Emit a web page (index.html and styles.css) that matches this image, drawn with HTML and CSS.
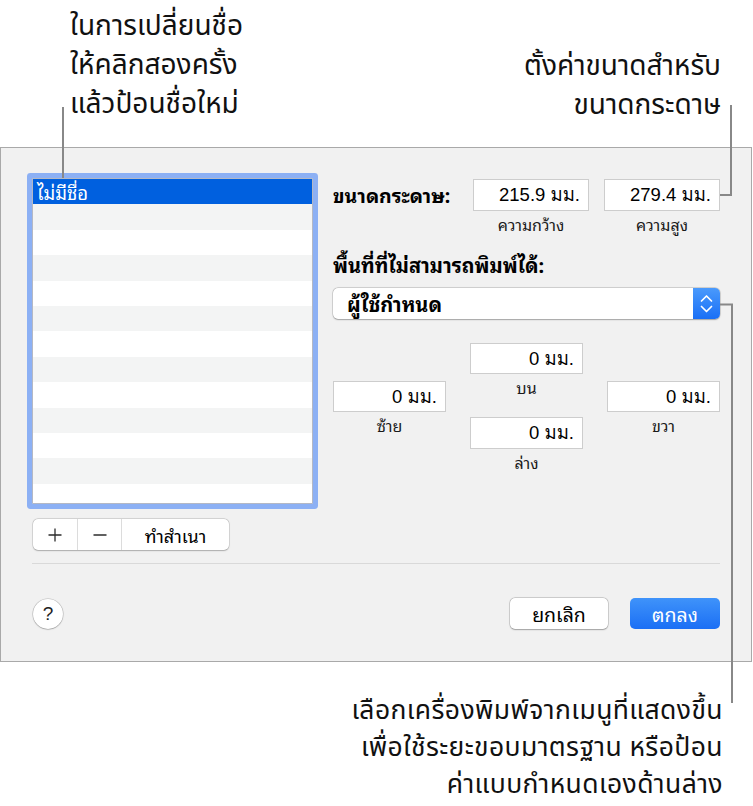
FILE: index.html
```html
<!DOCTYPE html>
<html lang="th">
<head>
<meta charset="utf-8">
<title>ขนาดกระดาษ</title>
<link rel="stylesheet" href="styles.css">
</head>
<body>
<div class="page">
  <div class="header">
    <div class="callout callout-left">ในการเปลี่ยนชื่อ<br>ให้คลิกสองครั้ง<br>แล้วป้อนชื่อใหม่</div>
    <div class="callout callout-right">ตั้งค่าขนาดสำหรับ<br>ขนาดกระดาษ</div>
  </div>

  <div class="window">
    <div class="window-body">
      <div class="left-col">
        <div class="list">
          <div class="row selected">ไม่มีชื่อ</div>
          <div class="row"></div><div class="row"></div><div class="row"></div>
          <div class="row"></div><div class="row"></div><div class="row"></div>
          <div class="row"></div><div class="row"></div><div class="row"></div>
          <div class="row"></div><div class="row"></div>
        </div>
        <div class="seg">
          <div class="seg-btn seg-plus"><svg width="14" height="14" viewBox="0 0 14 14"><path d="M7 0.5V13.5M0.5 7H13.5" stroke="#2b2b2b" stroke-width="1.3" fill="none"/></svg></div>
          <div class="seg-btn seg-minus"><svg width="14" height="14" viewBox="0 0 14 14"><path d="M0.5 7H13.5" stroke="#2b2b2b" stroke-width="1.3" fill="none"/></svg></div>
          <div class="seg-btn seg-dup">ทำสำเนา</div>
        </div>
      </div>

      <div class="right-col">
        <div class="size-row">
          <div class="size-label">ขนาดกระดาษ:</div>
          <div class="field-group">
            <div class="field">215.9 มม.</div>
            <div class="sub">ความกว้าง</div>
          </div>
          <div class="field-group">
            <div class="field">279.4 มม.</div>
            <div class="sub">ความสูง</div>
          </div>
        </div>

        <div class="section-label">พื้นที่ที่ไม่สามารถพิมพ์ได้:</div>

        <div class="popup">
          <div class="popup-text">ผู้ใช้กำหนด</div>
          <div class="stepper"><svg width="27" height="31" viewBox="0 0 27 31"><path d="M8.5 13L13.5 8L18.5 13M8.5 18.5L13.5 23.5L18.5 18.5" stroke="#fff" stroke-width="1.7" fill="none" stroke-linecap="round" stroke-linejoin="round"/></svg></div>
        </div>

        <div class="margins">
          <div class="mcol mcol-side">
            <div class="field mfield">0 มม.</div>
            <div class="sub">ซ้าย</div>
          </div>
          <div class="mcol">
            <div class="field mfield">0 มม.</div>
            <div class="sub">บน</div>
            <div class="field mfield mfield-bottom">0 มม.</div>
            <div class="sub">ล่าง</div>
          </div>
          <div class="mcol mcol-side">
            <div class="field mfield">0 มม.</div>
            <div class="sub">ขวา</div>
          </div>
        </div>
      </div>
    </div>

    <div class="separator"></div>

    <div class="footer">
      <div class="help">?</div>
      <div class="actions">
        <div class="btn btn-cancel">ยกเลิก</div>
        <div class="btn btn-ok">ตกลง</div>
      </div>
    </div>
  </div>

  <div class="callout callout-bottom">
    <div class="cline">เลือกเครื่องพิมพ์จากเมนูที่แสดงขึ้น</div>
    <div class="cline">เพื่อใช้ระยะขอบมาตรฐาน หรือป้อน</div>
    <div class="cline">ค่าแบบกำหนดเองด้านล่าง</div>
  </div>

  <svg class="leaders" width="753" height="806" viewBox="0 0 753 806">
    <path d="M63 107V178" />
    <path d="M731 105V195H720" />
    <path d="M720 304.5H732V703" />
  </svg>
</div>
</body>
</html>
```

FILE: styles.css
```css
html, body {
  margin: 0;
  padding: 0;
  background: #ffffff;
}

.page {
  position: relative;
  width: 753px;
  height: 806px;
  overflow: hidden;
  font-family: "Noto Sans Thai", "Noto Sans Thai UI", "Loma", "Garuda", "Noto Sans", "DejaVu Sans", sans-serif;
  color: #000;
}

.header {
  height: 147px;
  display: flex;
  justify-content: space-between;
}

.callout {
  font-size: 28px;
  line-height: 39px;
  color: #111;
}

.callout-left {
  padding-left: 70px;
  padding-top: 7px;
}

.callout-right {
  text-align: right;
  padding-right: 32px;
  padding-top: 47px;
}

.callout-bottom {
  text-align: right;
  padding-right: 30px;
  padding-top: 31px;
  font-size: 26.5px;
  line-height: 37px;
  letter-spacing: 0.4px;
}

.cline {
  height: 37px;
  white-space: nowrap;
}

.window {
  box-sizing: border-box;
  width: 752px;
  height: 515px;
  border: 1px solid #a9a9a9;
  background: #f1f1f1;
  padding: 30px 31px 0 31px;
  font-family: "Noto Sans Thai Looped", "Loma", "Noto Sans Thai", "Liberation Sans", "Noto Sans", sans-serif;
}

.window-body {
  display: flex;
  gap: 20px;
}

.left-col {
  width: 281px;
  display: flex;
  flex-direction: column;
}

.list {
  box-sizing: border-box;
  height: 326px;
  border: 1px solid #b4b8c4;
  border-radius: 1px;
  background: #ffffff;
  box-shadow: 0 0 0 5px #8cb0f4;
}

.row {
  height: 25.4px;
  background: #ffffff;
}

.row:nth-child(even) {
  background: #f3f4f4;
}

.row.selected {
  background: #0060df;
  color: #ffffff;
  font-size: 18.5px;
  line-height: 26px;
  padding-left: 4px;
}

.seg {
  margin-top: 15px;
  margin-left: 1px;
  width: 196px;
  height: 31px;
  display: flex;
  background: #ffffff;
  border-radius: 5px;
  box-shadow: 0 0 0 0.5px rgba(0,0,0,0.18), 0 0.5px 1.5px rgba(0,0,0,0.22);
  overflow: hidden;
}

.seg-btn {
  display: flex;
  align-items: center;
  justify-content: center;
  border-right: 1px solid #dcdcdc;
  font-size: 18px;
}

.seg-plus { width: 44px; }
.seg-minus { width: 43px; }
.seg-dup { flex: 1; border-right: none; }

.right-col {
  flex: 1;
  display: flex;
  flex-direction: column;
  padding-top: 1px;
}

.size-row {
  display: flex;
  gap: 15px;
}

.size-label {
  width: 125px;
  font-size: 19.5px;
  font-weight: bold;
  line-height: 32px;
  white-space: nowrap;
}

.field-group {
  width: 116px;
  display: flex;
  flex-direction: column;
}

.field {
  box-sizing: border-box;
  height: 32px;
  background: #ffffff;
  border: 1px solid #cdcdcd;
  text-align: right;
  padding-right: 8px;
  font-family: "Liberation Sans", "Loma", "Noto Sans Thai", sans-serif;
  font-size: 18.5px;
  line-height: 30px;
  white-space: nowrap;
}

.sub {
  text-align: center;
  font-size: 16px;
  line-height: 20px;
  margin-top: 3px;
  color: #1a1a1a;
}

.section-label {
  margin-top: 19px;
  font-size: 20px;
  font-weight: bold;
  line-height: 22px;
}

.popup {
  margin-top: 13px;
  height: 31px;
  display: flex;
  background: #ffffff;
  border-radius: 5px;
  box-shadow: 0 0 0 0.5px rgba(0,0,0,0.2), 0 0.5px 1.5px rgba(0,0,0,0.25);
  overflow: hidden;
}

.popup-text {
  flex: 1;
  padding-left: 14px;
  font-size: 20px;
  font-weight: bold;
  line-height: 31px;
}

.stepper {
  width: 27px;
  height: 31px;
  background: linear-gradient(#4a9afc, #1a6ff6);
}

.stepper svg {
  display: block;
}

.margins {
  margin-top: 24px;
  display: grid;
  grid-template-columns: 113px 113px 113px;
  column-gap: 24px;
}

.mcol {
  display: flex;
  flex-direction: column;
}

.mcol-side {
  padding-top: 38px;
}

.mfield {
  height: 31px;
  line-height: 29px;
}

.mfield-bottom {
  margin-top: 20px;
  height: 32px;
  line-height: 30px;
}

.separator {
  margin-top: 13px;
  height: 1px;
  background: #d9d9d9;
}

.footer {
  margin-top: 34px;
  display: flex;
  justify-content: space-between;
  align-items: center;
  padding-left: 1px;
}

.help {
  width: 30px;
  height: 30px;
  border-radius: 50%;
  background: #ffffff;
  box-shadow: 0 0 0 0.5px rgba(0,0,0,0.2), 0 0.5px 1.5px rgba(0,0,0,0.25);
  font-family: "Liberation Sans", sans-serif;
  font-size: 19px;
  line-height: 30px;
  text-align: center;
  color: #222;
}

.actions {
  display: flex;
  gap: 22px;
}

.btn {
  box-sizing: border-box;
  height: 31px;
  border-radius: 5px;
  font-size: 19.5px;
  line-height: 31px;
  text-align: center;
}

.btn-cancel {
  width: 98px;
  background: #ffffff;
  box-shadow: 0 0 0 0.5px rgba(0,0,0,0.22), 0 0.5px 1.5px rgba(0,0,0,0.25);
}

.btn-ok {
  width: 90px;
  background: linear-gradient(#3f93fa, #1b6ff5);
  color: #ffffff;
}

.leaders {
  position: absolute;
  left: 0;
  top: 0;
  pointer-events: none;
}

.leaders path {
  fill: none;
  stroke: #888888;
  stroke-width: 2;
}
```
